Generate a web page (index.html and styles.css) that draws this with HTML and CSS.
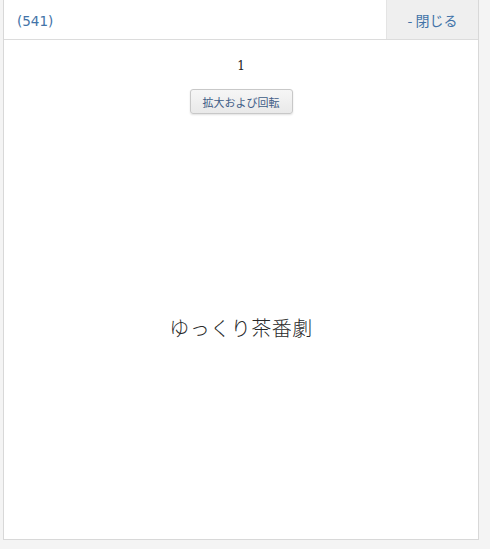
FILE: index.html
```html
<!DOCTYPE html>
<html lang="ja">
<head>
<meta charset="utf-8">
<link rel="stylesheet" href="styles.css">
</head>
<body>
<div class="panel">
  <div class="header">
    <div class="title">(541)</div>
    <div class="close">- 閉じる</div>
  </div>
  <div class="content">
    <div class="num">1</div>
    <button class="btn">拡大および回転</button>
    <div class="image">
      <div class="caption">ゆっくり茶番劇</div>
    </div>
  </div>
</div>
</body>
</html>
```
FILE: styles.css
```css
html, body {
  margin: 0;
  padding: 0;
  background: #f4f4f4;
}
body {
  width: 490px;
  height: 549px;
  overflow: hidden;
}
.panel {
  margin-left: 3px;
  width: 474px;
  height: 539px;
  background: #fff;
  border: 1px solid #d8d8d8;
  border-top: none;
  display: flex;
  flex-direction: column;
}
.header {
  display: flex;
  height: 39px;
  border-bottom: 1px solid #dcdcdc;
  font-family: "DejaVu Sans", "Noto Sans CJK JP", sans-serif;
  font-size: 13.5px;
  color: #4273a8;
}
.title {
  flex: 1;
  padding-left: 13px;
  padding-top: 2px;
  display: flex;
  align-items: center;
}
.close {
  width: 91px;
  background: #efefef;
  border-left: 1px solid #e4e4e4;
  display: flex;
  align-items: center;
  justify-content: center;
  font-family: "Noto Sans CJK JP", sans-serif;
  font-size: 14px;
  padding-top: 1px;
}
.content {
  flex: 1;
  display: flex;
  flex-direction: column;
  align-items: center;
}
.num {
  margin-top: 18px;
  font-family: "DejaVu Serif", serif;
  font-size: 12px;
  line-height: 16px;
  color: #222;
}
.btn {
  margin-top: 15px;
  width: 103px;
  height: 25px;
  padding: 0;
  border: 1px solid #c8c8c8;
  border-radius: 3px;
  background: linear-gradient(#f6f6f6, #e9e9e9);
  box-shadow: 0 1px 2px rgba(0,0,0,0.12);
  font-family: "Noto Sans CJK JP", sans-serif;
  font-size: 11px;
  color: #3e5c86;
}
.image {
  flex: 1;
  width: 100%;
  display: flex;
  align-items: center;
  justify-content: center;
}
.caption {
  margin-top: 2px;
  font-family: "Noto Sans CJK JP", serif;
  font-weight: 300;
  font-size: 20px;
  letter-spacing: 0.5px;
  color: #2a2a2a;
}
```
